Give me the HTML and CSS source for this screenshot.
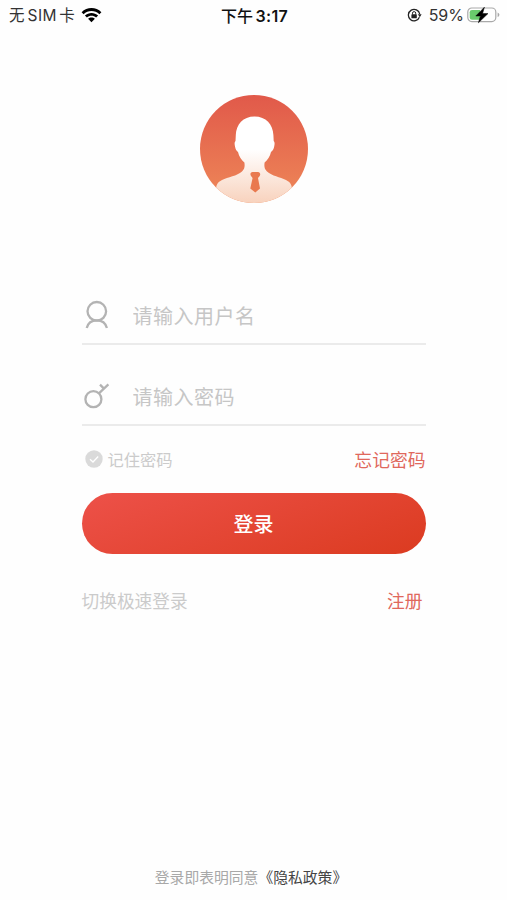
FILE: index.html
```html
<!DOCTYPE html>
<html lang="zh-CN">
<head>
  <meta charset="UTF-8" />
  <meta name="viewport" content="width=device-width, initial-scale=1.0" />
  <title>登录</title>
  <link rel="stylesheet" href="styles.css">
</head>
<body>

  <header class="status-bar">
    <div class="status-left">
      <div>无<span class="sim">SIM</span>卡</div>
      <svg class="wifi" width="21" height="16" viewBox="0 0 21 16">
        <path d="M0.6 5.2 C6 -0.3 15 -0.3 20.4 5.2 L18.4 7.3 C14 3 7 3 2.6 7.3 Z" />
        <path d="M3.9 8.6 C7.5 5 13.5 5 17.1 8.6 L15.1 10.6 C12.5 8.1 8.5 8.1 5.9 10.6 Z" />
        <path d="M7.1 11.8 C9 10 12 10 13.9 11.8 L10.5 15.3 Z" />
      </svg>
    </div>
    <div class="status-time">下午 <b>3:17</b></div>
    <div class="status-right">
      <svg class="lock" width="15" height="14" viewBox="0 0 15 14">
        <path d="M12.4 9.2 A5.7 5.7 0 1 1 12.7 6" fill="none" stroke="#222" stroke-width="1.3" />
        <path d="M10.9 6.3 H14.6 L12.8 9.2 Z" fill="#222" />
        <rect x="4.4" y="6.3" width="5.4" height="4" rx="0.6" fill="#222" />
        <path d="M5.5 6.5 V5.2 A1.6 1.6 0 0 1 8.7 5.2 V6.5" fill="none" stroke="#222" stroke-width="1" />
      </svg>
      <span class="percent">59%</span>
      <svg class="battery" width="33" height="18" viewBox="0 0 33 18">
        <rect x="0.8" y="2" width="28" height="13.6" rx="4" fill="#fff" stroke="#a9a9a9" stroke-width="1.2" />
        <path d="M5 4 H13 V13.7 H5 Q2.7 13.7 2.7 11.4 V6.3 Q2.7 4 5 4 Z" fill="#69ca6c" />
        <path d="M30.6 6.5 Q32.4 7.2 32.4 8.8 Q32.4 10.4 30.6 11.1 Z" fill="#a9a9a9" />
        <path d="M17.4 1.2 L8.8 10 H13.4 L11.4 16.8 L21 7.6 H15.6 Z" fill="#000" stroke="#000" stroke-width="0.5" />
      </svg>
    </div>
  </header>

  <main class="login">
    <svg class="avatar" width="108" height="108" viewBox="0 0 108 108">
      <defs>
        <linearGradient id="avatarBg" x1="0" y1="0" x2="0" y2="1">
          <stop offset="0" stop-color="#e1594a" />
          <stop offset="1" stop-color="#ee8858" />
        </linearGradient>
        <linearGradient id="avatarBody" x1="0" y1="0" x2="0" y2="1">
          <stop offset="0" stop-color="#fff" />
          <stop offset="0.38" stop-color="#fff" />
          <stop offset="1" stop-color="#f8d2bd" />
        </linearGradient>
        <clipPath id="avatarClip"><circle cx="54" cy="54" r="54" /></clipPath>
      </defs>
      <circle cx="54" cy="54" r="54" fill="url(#avatarBg)" />
      <g clip-path="url(#avatarClip)">
        <path fill="url(#avatarBody)" d="M54.5 21.5 C43 21.5 36.2 29.5 35.8 40 L35.5 46 C34.4 47 34.4 49 35 51.5 C35.6 54.3 36.5 56 38 57 C39 61.5 41.5 65 44.4 67.5 C45 71.5 44.5 74 42 76.5 C37 81 28 82 22 85 C17.5 87.3 16 90 16 95 L16 108 H92 V95 C92 90 90.5 87.3 86 85 C80 82 72 81 67 76.5 C64.5 74 64 71.5 64.6 67.5 C67.5 65 70 61.5 71 57 C72.5 56 73.6 54.3 74.2 51.5 C74.8 49 74.8 47 73.7 46 L73.4 40 C73 29.5 66 21.5 54.5 21.5 Z" />
        <path fill="#e9794f" d="M52.5 77 H58 C60 77 61 79.5 59.5 81.2 L58 83 L60 93.5 L55.3 97.5 L50.3 93.5 L52.6 83 L51.2 81.2 C49.7 79.5 50.5 77 52.5 77 Z" />
      </g>
    </svg>

    <form class="login-form">
      <label class="field">
        <svg class="field-icon" width="30" height="30" viewBox="0 0 30 30">
          <circle cx="14.8" cy="11.3" r="9.3" />
          <path d="M4.7 28 C6 23 9.5 20.4 14.8 20.4 C20.1 20.4 23.6 23 24.9 28" />
        </svg>
        <input type="text" placeholder="请输入用户名" />
      </label>
      <label class="field">
        <svg class="field-icon" width="30" height="30" viewBox="0 0 30 30">
          <circle cx="11.4" cy="18.2" r="8" />
          <path d="M16.9 12.3 L26.4 3.4 M18 3.6 L22 7.6" />
        </svg>
        <input type="password" placeholder="请输入密码" />
      </label>

      <div class="options">
        <span class="remember">
          <svg width="18" height="18" viewBox="0 0 18 18">
            <circle cx="9" cy="9" r="8.7" fill="#dadada" />
            <path d="M5 9.2 L8 12 L13.2 6.5" fill="none" stroke="#fff" stroke-width="1.3" />
          </svg>
          记住密码
        </span>
        <a class="forgot" href="#">忘记密码</a>
      </div>

      <button class="submit" type="button">登录</button>

      <div class="links">
        <a class="switch" href="#">切换极速登录</a>
        <a class="register" href="#">注册</a>
      </div>
    </form>
  </main>

  <footer class="agreement">登录即表明同意<a href="#">《隐私政策》</a></footer>

</body>
</html>
```

FILE: styles.css
```css
* {
  box-sizing: border-box;
}

body {
  margin: 0;
  height: 900px;
  display: flex;
  flex-direction: column;
  background: #fefefe;
  font-family: "Noto Sans CJK SC", sans-serif;
  overflow: hidden;
}

a {
  text-decoration: none;
}

/* Status bar */
.status-bar {
  display: grid;
  grid-template-columns: 1fr auto 1fr;
  align-items: center;
  height: 28px;
  padding: 0 7px 0 9px;
  font-size: 16px;
  line-height: 28px;
  color: #333;
}

.status-left,
.status-right {
  display: flex;
  align-items: center;
}

.status-left {
  font-size: 15.5px;
}

.sim {
  margin: 0 2px 0 3px;
  font-family: Inter, sans-serif;
  letter-spacing: 0.5px;
}

.wifi {
  margin-left: 6px;
  fill: #000;
}

.status-time {
  font-weight: 500;
  color: #111;
}

.status-time b {
  margin-left: -1px;
  font-family: Inter, sans-serif;
  font-weight: 600;
  letter-spacing: 0.3px;
}

.status-right {
  justify-content: flex-end;
}

.percent {
  margin: 0 3px 0 7px;
  font-family: Inter, sans-serif;
}

/* Login */
.login {
  flex: 1;
  display: flex;
  flex-direction: column;
  align-items: center;
  padding-top: 67px;
}

.login-form {
  width: 344px;
  margin-top: 84px;
}

.field {
  display: flex;
  align-items: center;
  height: 58px;
  border-bottom: 2px solid #ebebeb;
}

.field + .field {
  margin-top: 23px;
}

.field-icon {
  fill: none;
  stroke: #b3b3b3;
  stroke-width: 2.3;
}

.field input {
  width: 280px;
  margin-left: 21px;
  padding: 0;
  border: none;
  outline: none;
  background: none;
  font-family: inherit;
  font-size: 20px;
  letter-spacing: 0.5px;
}

.field input::placeholder {
  color: #c6c6c6;
}

.options {
  display: flex;
  justify-content: space-between;
  align-items: center;
  height: 67px;
  padding: 0 0 2px 3px;
}

.remember {
  display: flex;
  align-items: center;
  gap: 5px;
  font-size: 16.3px;
  color: #cbcbcb;
}

.forgot,
.register {
  font-size: 17.8px;
  color: #e0685c;
}

.submit {
  display: block;
  width: 100%;
  height: 61px;
  padding: 0;
  border: none;
  border-radius: 31px;
  background: linear-gradient(160deg, #ed5149, #db3b20);
  font-family: inherit;
  font-size: 20px;
  font-weight: 500;
  color: #fff;
}

.links {
  display: flex;
  justify-content: space-between;
  margin-top: 33px;
  padding-right: 3px;
  line-height: 26px;
}

.switch {
  font-size: 17.7px;
  color: #cbcbcb;
}

/* Agreement */
.agreement {
  height: 34px;
  padding-right: 5px;
  font-size: 14.8px;
  line-height: 22px;
  text-align: center;
  color: #a8a8a8;
}

.agreement a {
  color: #444;
}
```
